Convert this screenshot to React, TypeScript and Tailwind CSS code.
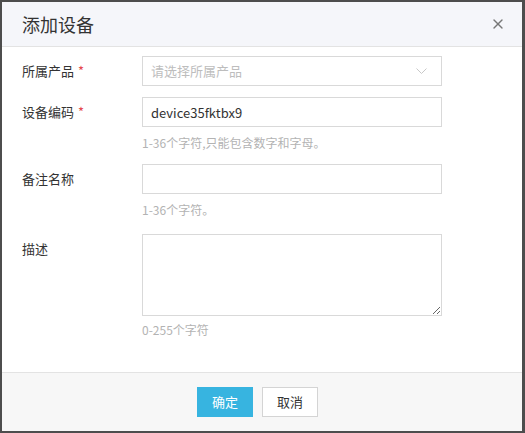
import { X } from 'lucide-react';

const font = { fontFamily: '"Noto Sans CJK SC", "Liberation Sans", sans-serif' };

function Label({ text, required }: { text: string; required?: boolean }) {
  return (
    <div className="w-[140px] shrink-0 pl-[20px] text-[13px] leading-[30px] text-[#333]">
      {text}
      {required && <span className="ml-[4px] text-[#e5484d]">*</span>}
    </div>
  );
}

export default function App() {
  return (
    <div className="h-[433px] w-[525px] bg-[#4d4d4d] pl-[2px] pt-[2px]" style={font}>
      <div className="flex h-[429px] w-[520px] flex-col bg-white">
        <div className="flex h-[45px] items-center justify-between border-b border-[#e3e3e3] bg-[#f5f6fa] pl-[20px] pr-[16px]">
          <h1 className="text-[18px] font-normal text-[#333]">添加设备</h1>
          <X className="h-[16px] w-[16px] text-[#777]" strokeWidth={2} />
        </div>

        <div className="flex-1 pt-[9px]">
          <div className="flex">
            <Label text="所属产品" required />
            <div className="flex h-[30px] w-[300px] items-center justify-between border border-[#d9d9d9] px-[8px] text-[13px] text-[#bdbdbd]">
              <span>请选择所属产品</span>
              <svg width="11" height="7" viewBox="0 0 11 7" className="mr-[6px]">
                <path d="M0.5 0.5 L5.5 5.5 L10.5 0.5" fill="none" stroke="#c8c8c8" strokeWidth="1" />
              </svg>
            </div>
          </div>

          <div className="mt-[11px] flex">
            <Label text="设备编码" required />
            <div>
              <input
                defaultValue="device35fktbx9"
                className="h-[30px] w-[300px] border border-[#d9d9d9] px-[8px] text-[13px] text-[#333] outline-none"
                style={font}
              />
              <div className="mt-[6px] h-[20px] text-[12px] leading-[20px] text-[#b3b3b3]">
                1-36个字符,只能包含数字和字母。
              </div>
            </div>
          </div>

          <div className="mt-[11px] flex">
            <Label text="备注名称" />
            <div>
              <input className="h-[30px] w-[300px] border border-[#d9d9d9] px-[8px] text-[13px] outline-none" />
              <div className="mt-[6px] h-[20px] text-[12px] leading-[20px] text-[#b3b3b3]">1-36个字符。</div>
            </div>
          </div>

          <div className="mt-[14px] flex">
            <Label text="描述" />
            <div>
              <textarea className="block h-[82px] w-[300px] border border-[#d9d9d9] px-[8px] py-[4px] text-[13px] outline-none" />
              <div className="mt-[4px] h-[20px] text-[12px] leading-[20px] text-[#b3b3b3]">0-255个字符</div>
            </div>
          </div>
        </div>

        <div className="flex h-[59px] items-center justify-center gap-[9px] border-t border-[#e3e3e3] bg-[#f7f7f7] pr-[9px]">
          <button className="h-[30px] w-[56px] bg-[#37b4e0] text-[13px] text-white">确定</button>
          <button className="h-[30px] w-[56px] border border-[#d4d4d4] bg-white text-[13px] text-[#333]">取消</button>
        </div>
      </div>
    </div>
  );
}
